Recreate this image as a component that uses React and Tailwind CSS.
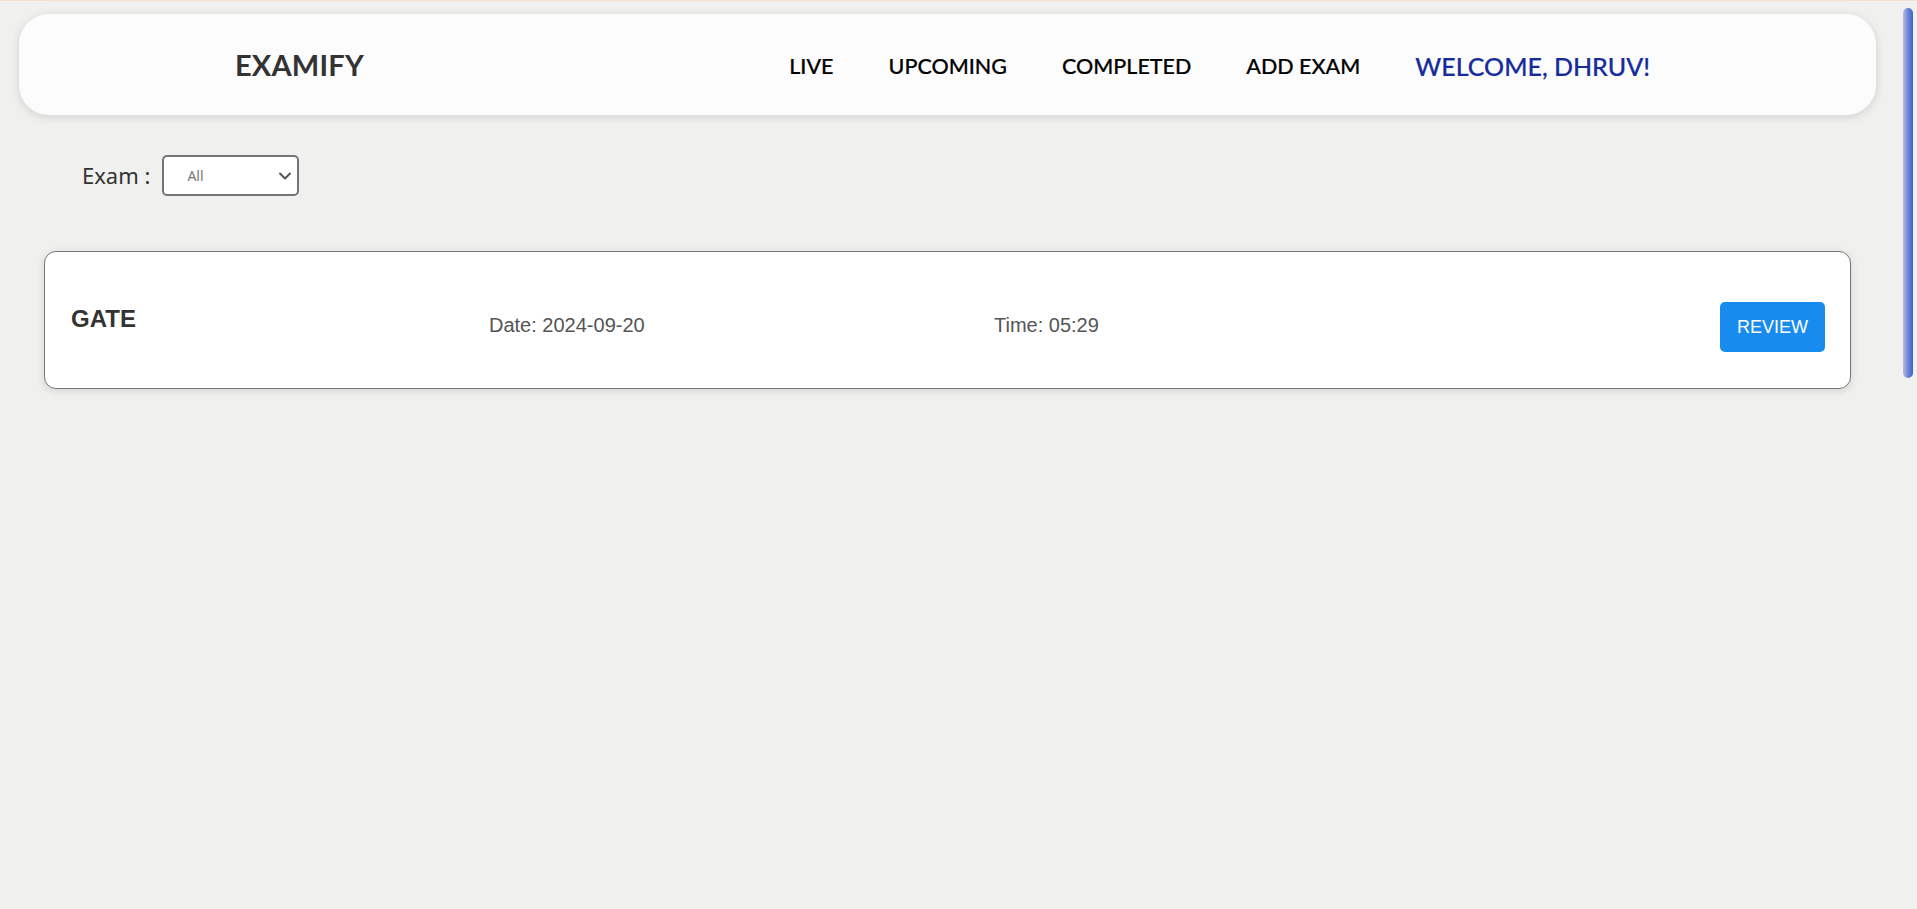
import React from "react";

export default function App() {
  return (
    <div className="flex min-h-[909px] w-full bg-[#f0f0ee] border-t border-[#efe4d4]" style={{ fontFamily: "Lato, sans-serif" }}>
      <div className="flex-1 min-w-0">
        <nav className="mx-[19px] mt-[13px] h-[101px] rounded-[30px] bg-[#fcfcfc] shadow-[0_2px_10px_rgba(0,0,0,0.13)] flex items-center">
          <div className="w-[216px] shrink-0" />
          <div className="text-[29px] font-bold text-[#333] tracking-[0.2px]">EXAMIFY</div>
          <div className="flex-1" />
          <ul className="flex items-center gap-[55px] mr-[226px] mt-[4px] text-black">
            <li className="text-[21.5px] font-medium [-webkit-text-stroke:0.2px_black]">LIVE</li>
            <li className="text-[21.5px] font-medium [-webkit-text-stroke:0.2px_black]">UPCOMING</li>
            <li className="text-[21.5px] font-medium [-webkit-text-stroke:0.2px_black]">COMPLETED</li>
            <li className="text-[21.5px] font-medium [-webkit-text-stroke:0.2px_black]">ADD EXAM</li>
            <li className="text-[25px] font-medium text-[#172c9c] [-webkit-text-stroke:0.2px_#172c9c]">WELCOME, DHRUV!</li>
          </ul>
        </nav>

        <div className="flex items-center ml-[82px] mt-[40px] gap-[12px]">
          <span className="text-[22px] text-[#333]" style={{ fontFamily: "'Noto Sans', sans-serif" }}>Exam :</span>
          <div className="relative w-[137px] h-[41px] rounded-[5px] border-2 border-[#757575] bg-white flex items-center pl-[23px]">
            <span className="text-[14px] text-[#777]" style={{ fontFamily: "'Noto Sans', sans-serif" }}>All</span>
            <svg className="absolute right-[5px] top-[14px]" width="14" height="10" viewBox="0 0 14 10" fill="none">
              <path d="M2 2.5 L7 7.5 L12 2.5" stroke="#555" strokeWidth="2" strokeLinecap="round" strokeLinejoin="round" />
            </svg>
          </div>
        </div>

        <div className="mx-[44px] mt-[55px] h-[138px] rounded-[12px] border border-[#777] bg-white shadow-[0_2px_8px_rgba(0,0,0,0.12)] flex items-start pt-[50px] pl-[26px] pr-[25px]" style={{ fontFamily: "'Liberation Sans', Arial, sans-serif" }}>
          <div className="w-[418px] shrink-0 text-[24px] font-bold text-[#333] leading-[28px] mt-[3px]">GATE</div>
          <div className="w-[505px] shrink-0 text-[20px] text-[#555] leading-[23px] mt-[12px]">Date: 2024-09-20</div>
          <div className="text-[20px] text-[#555] leading-[23px] mt-[12px]">Time: 05:29</div>
          <button className="ml-auto w-[105px] h-[50px] rounded-[5px] bg-[#178bee] text-white text-[18px]">REVIEW</button>
        </div>
      </div>
      <div className="w-[22px] shrink-0 pt-[7px] pl-[8px]">
        <div className="w-[10px] h-[370px] rounded-full bg-gradient-to-r from-[#b4bde0] via-[#6f86d6] to-[#3f5fd0]" />
      </div>
    </div>
  );
}
